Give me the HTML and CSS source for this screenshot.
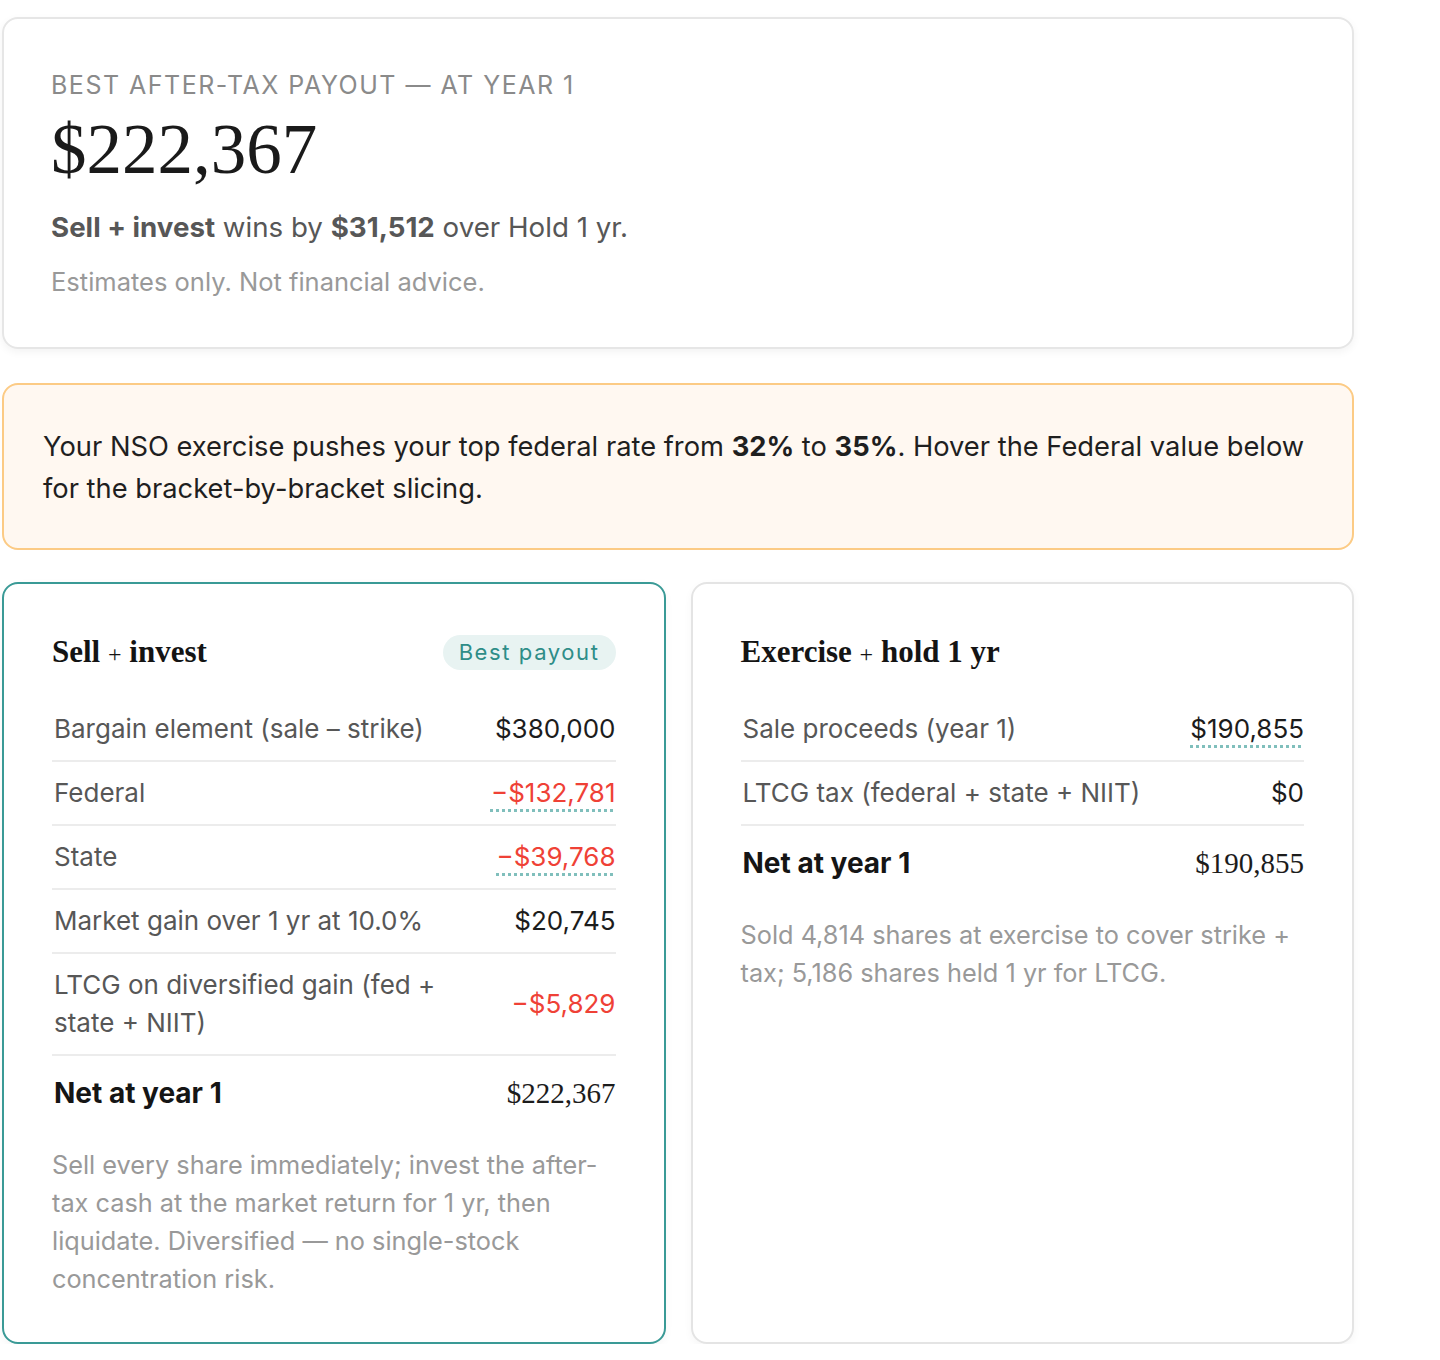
FILE: index.html
```html
<!DOCTYPE html>
<html lang="en">
<head>
    <meta charset="UTF-8">
    <meta name="viewport" content="width=device-width, initial-scale=1.0">
    <title>NSO exercise — after-tax payout</title>
    <link rel="stylesheet" href="styles.css">
</head>
<body>

    <div class="page">

        <section class="summary">
            <p class="eyebrow">Best after-tax payout — at year 1</p>
            <p class="big-number">$222,367</p>
            <p class="verdict"><strong>Sell + invest</strong> wins by <strong>$31,512</strong> over Hold 1 yr.</p>
            <p class="disclaimer">Estimates only. Not financial advice.</p>
        </section>

        <section class="notice">
            Your NSO exercise pushes your top federal rate from <strong>32%</strong> to <strong>35%</strong>. Hover the Federal value below for the bracket-by-bracket slicing.
        </section>

        <div class="strategies">

            <div class="strategy best">
                <div class="strategy-head">
                    <h3>Sell <span class="plus">+</span> invest</h3>
                    <span class="badge">Best payout</span>
                </div>
                <div class="row">
                    <span class="label">Bargain element (sale – strike)</span>
                    <span class="value">$380,000</span>
                </div>
                <div class="row">
                    <span class="label">Federal</span>
                    <span class="value negative hint">−$132,781</span>
                </div>
                <div class="row">
                    <span class="label">State</span>
                    <span class="value negative hint">−$39,768</span>
                </div>
                <div class="row">
                    <span class="label">Market gain over 1 yr at 10.0%</span>
                    <span class="value">$20,745</span>
                </div>
                <div class="row">
                    <span class="label">LTCG on diversified gain (fed + state + NIIT)</span>
                    <span class="value negative">−$5,829</span>
                </div>
                <div class="row total">
                    <span class="label">Net at year 1</span>
                    <span class="value">$222,367</span>
                </div>
                <p class="note">Sell every share immediately; invest the after-tax cash at the market return for 1 yr, then liquidate. Diversified — no single-stock concentration risk.</p>
            </div>

            <div class="strategy">
                <div class="strategy-head">
                    <h3>Exercise <span class="plus">+</span> hold 1 yr</h3>
                </div>
                <div class="row">
                    <span class="label">Sale proceeds (year 1)</span>
                    <span class="value hint">$190,855</span>
                </div>
                <div class="row">
                    <span class="label">LTCG tax (federal + state + NIIT)</span>
                    <span class="value">$0</span>
                </div>
                <div class="row total">
                    <span class="label">Net at year 1</span>
                    <span class="value">$190,855</span>
                </div>
                <p class="note">Sold 4,814 shares at exercise to cover strike + tax; 5,186 shares held 1 yr for LTCG.</p>
            </div>

        </div>
    </div>

</body>
</html>
```

FILE: styles.css
```css
:root {
    --ink: #1c1c1c;
    --muted: #575757;
    --faint: #999999;
    --line: #ececec;
    --teal: #3a9a96;
    --teal-soft: #e8f3f2;
    --red: #ef4136;
    --serif: 'Liberation Serif', 'Times New Roman', serif;
}

* {
    margin: 0;
    padding: 0;
    box-sizing: border-box;
}

body {
    font-family: 'Inter', 'Noto Sans', sans-serif;
    background-color: #ffffff;
    color: var(--ink);
}

.page {
    width: 1352px;
    margin: 17px 0 0 2px;
    display: flex;
    flex-direction: column;
}

/* Tarjeta resumen */
.summary {
    border: 2px solid #e6e6e6;
    border-radius: 16px;
    padding: 50px 47px 48px;
    margin-bottom: 34px;
    box-shadow: 0 3px 8px rgba(0, 0, 0, 0.05);
}

.eyebrow {
    font-size: 25px;
    line-height: 32px;
    letter-spacing: 1.5px;
    text-transform: uppercase;
    color: #8a8a8a;
}

.big-number {
    font-family: var(--serif);
    font-size: 71px;
    line-height: 80px;
    margin-top: 8px;
    color: #1a1a1a;
}

.verdict {
    font-size: 27.7px;
    line-height: 36px;
    margin-top: 20px;
    color: var(--muted);
}

.verdict strong {
    font-weight: 700;
}

.disclaimer {
    font-size: 25.5px;
    line-height: 34px;
    margin-top: 20px;
    color: var(--faint);
}

/* Aviso de tramo */
.notice {
    background-color: #fff8f1;
    border: 2px solid #fccb85;
    border-radius: 16px;
    padding: 41px 39px 38px;
    margin-bottom: 32px;
    font-size: 27.3px;
    line-height: 42px;
    color: #1f1f1f;
}

/* Estrategias */
.strategies {
    display: grid;
    grid-template-columns: 1fr 1fr;
    gap: 25px;
}

.strategy {
    border: 2px solid #e4e4e4;
    border-radius: 16px;
    padding: 50px 48px 44px;
    box-shadow: 0 3px 8px rgba(0, 0, 0, 0.04);
}

.strategy.best {
    border-color: var(--teal);
}

.strategy-head {
    display: flex;
    align-items: center;
    justify-content: space-between;
    height: 36px;
    margin-bottom: 28px;
}

.strategy-head h3 {
    font-family: var(--serif);
    font-size: 31px;
    font-weight: 700;
    color: #141414;
}

.strategy-head .plus {
    font-weight: 400;
    font-size: 24px;
}

.badge {
    background-color: var(--teal-soft);
    color: #2e8d88;
    font-size: 22px;
    letter-spacing: 1.6px;
    line-height: 35px;
    padding: 0 16px;
    border-radius: 18px;
}

.row {
    display: flex;
    align-items: center;
    justify-content: space-between;
    gap: 32px;
    padding: 12px 0;
    border-bottom: 2px solid var(--line);
    font-size: 26px;
    line-height: 38px;
}

.row .label {
    color: var(--muted);
    padding-left: 2px;
}

.row .value {
    white-space: nowrap;
    color: var(--ink);
}

.row .value.negative {
    color: var(--red);
}

.row .value.hint {
    text-decoration: underline dotted #80bfbc;
    text-decoration-thickness: 3px;
    text-underline-offset: 7px;
    cursor: help;
}

.row.total {
    border-bottom: none;
    padding: 18px 0;
}

.row.total .label {
    font-size: 28px;
    font-weight: 700;
    color: #151515;
}

.row.total .value {
    font-family: var(--serif);
    font-size: 29px;
}

.note {
    margin-top: 16px;
    font-size: 25.3px;
    line-height: 38px;
    color: var(--faint);
}
```
